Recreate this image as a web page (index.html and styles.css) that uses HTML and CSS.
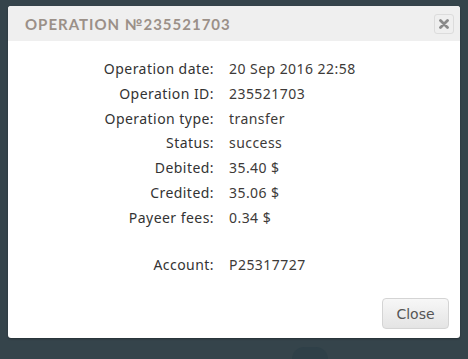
FILE: index.html
```html
<!DOCTYPE html>
<html lang="en">

<head>
    <meta charset="UTF-8">
    <title>Operation</title>
    <link rel="stylesheet" href="styles.css">
</head>

<body>
    <div class="backdrop-dot"></div>
    <div class="modal">
        <div class="modal-header">
            <h3 class="modal-title">Operation №235521703</h3>
            <button class="btn-x" type="button">
                <svg width="10" height="10" viewBox="0 0 10 10">
                    <path d="M1.5 1.5 L8.5 8.5 M8.5 1.5 L1.5 8.5" stroke="#8a8a8a" stroke-width="2.8" stroke-linecap="round" />
                </svg>
            </button>
        </div>
        <div class="modal-body">
            <dl class="details">
                <dt>Operation date:</dt><dd>20 Sep 2016 22:58</dd>
                <dt>Operation ID:</dt><dd>235521703</dd>
                <dt>Operation type:</dt><dd>transfer</dd>
                <dt>Status:</dt><dd>success</dd>
                <dt>Debited:</dt><dd>35.40 $</dd>
                <dt>Credited:</dt><dd>35.06 $</dd>
                <dt>Payeer fees:</dt><dd>0.34 $</dd>
                <dt class="gap">Account:</dt><dd class="gap">P25317727</dd>
            </dl>
        </div>
        <div class="modal-footer">
            <button class="btn" type="button">Close</button>
        </div>
    </div>
</body>

</html>
```

FILE: styles.css
```css
* {
    margin: 0;
    padding: 0;
    box-sizing: border-box;
}

html {
    overflow: hidden;
}

body {
    background: #35444b;
    padding: 6px 8px 0 8px;
    height: 359px;
    overflow: hidden;
    position: relative;
    font-family: "Noto Sans", "DejaVu Sans", sans-serif;
}

/* faint circle peeking out under the dialog */
.backdrop-dot {
    position: absolute;
    left: 292px;
    top: 347px;
    width: 36px;
    height: 12px;
    border-radius: 18px 18px 0 0;
    background: #2f4048;
}

.modal {
    position: relative;
    background: #fff;
    border-radius: 3px;
    overflow: hidden;
    box-shadow: 0 1px 2px rgba(0, 0, 0, 0.3);
}

.modal-header {
    background: #efefef;
    height: 35px;
    display: flex;
    align-items: center;
    justify-content: space-between;
    padding: 0 6px 0 17px;
}

.modal-title {
    font-family: "Lato", sans-serif;
    font-weight: 700;
    font-size: 15px;
    letter-spacing: 1px;
    text-transform: uppercase;
    color: #9b9088;
}

.btn-x {
    width: 20px;
    height: 20px;
    border: 1px solid #dcdcdc;
    border-radius: 3px;
    background: #efefef;
    display: flex;
    align-items: center;
    justify-content: center;
}

.modal-body {
    height: 257px;
    padding: 18px 0 0 0;
}

.details {
    display: grid;
    grid-template-columns: 206px 1fr;
    column-gap: 15px;
    row-gap: 5.1px;
    font-size: 14px;
    line-height: 19.7px;
    letter-spacing: 0.45px;
    color: #333;
}

.details dt {
    text-align: right;
}

.details dd {
    color: #3d3a38;
}

.details .gap {
    margin-top: 22px;
}

.modal-footer {
    display: flex;
    justify-content: flex-end;
    padding: 0 11px 9px 0;
}

.btn {
    width: 67px;
    height: 31px;
    border: 1px solid #d4d4d4;
    border-radius: 4px;
    background: linear-gradient(#f7f7f7, #e4e4e4);
    color: #555;
    font-family: "DejaVu Sans", sans-serif;
    font-size: 14px;
}
```
